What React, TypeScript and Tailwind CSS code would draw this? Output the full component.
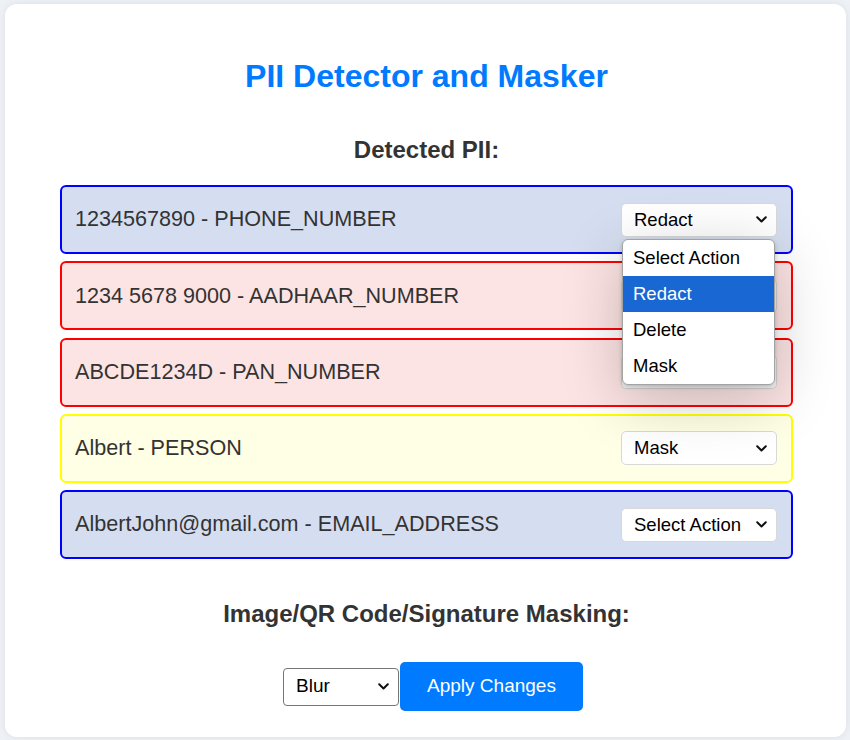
import React from "react";

type Pii = { text: string; kind: "blue" | "red" | "yellow"; action: string };

// rows 2 and 3 sit under the open menu, so their value is not shown
const items: Pii[] = [
  { text: "1234567890 - PHONE_NUMBER", kind: "blue", action: "Redact" },
  { text: "1234 5678 9000 - AADHAAR_NUMBER", kind: "red", action: "" },
  { text: "ABCDE1234D - PAN_NUMBER", kind: "red", action: "" },
  { text: "Albert - PERSON", kind: "yellow", action: "Mask" },
  { text: "AlbertJohn@gmail.com - EMAIL_ADDRESS", kind: "blue", action: "Select Action" },
];

const rowStyles: Record<Pii["kind"], string> = {
  blue: "bg-[#d5def0] border-[#0000ff]",
  red: "bg-[#fde4e4] border-[#ff0000]",
  yellow: "bg-[#ffffe5] border-[#ffff00]",
};

function Chevron() {
  return (
    <svg width="11" height="7" viewBox="0 0 11 7" fill="none">
      <polyline points="1.2,1.2 5.5,5.5 9.8,1.2" stroke="#111" strokeWidth="2" strokeLinecap="round" strokeLinejoin="round" />
    </svg>
  );
}

function ActionSelect({ value, open }: { value: string; open?: boolean }) {
  return (
    <div className="relative">
      <div className="flex h-[34px] w-[156px] items-center justify-between rounded-[5px] border border-[#d8d8d8] bg-white pl-[12px] pr-[9px] text-[18.5px] text-black">
        <span>{value}</span>
        <Chevron />
      </div>
      {open && (
        <div className="absolute left-[1px] top-[36px] z-10 w-[153px] overflow-hidden rounded-[6px] border border-[#a3a3a3] bg-white text-[18.5px] text-black shadow-[0_14px_60px_rgba(0,0,0,0.22),0_2px_4px_rgba(0,0,0,0.2)]">
          {["Select Action", "Redact", "Delete", "Mask"].map((o) => (
            <div
              key={o}
              className={`flex h-[36px] items-center pl-[10px] ${o === value ? "bg-[#1967d2] text-white" : ""}`}
            >
              {o}
            </div>
          ))}
        </div>
      )}
    </div>
  );
}

export default function App() {
  return (
    <div className="min-h-[740px] bg-[#eef1f5] pt-[4px] font-['Liberation_Sans',Arial,sans-serif]">
      <div className="ml-[5px] w-[841px] rounded-[12px] bg-white pb-[26px] pl-[55px] pr-[53px] pt-[54px] shadow-[0_0_8px_rgba(0,0,0,0.08)]">
        <h1 className="text-center text-[32px] font-bold leading-[37px] text-[#007bff]">PII Detector and Masker</h1>

        <h2 className="mt-[41px] text-center text-[24px] font-bold leading-[28px] text-[#333]">Detected PII:</h2>

        <div className="mt-[21px] flex flex-col gap-[7.25px]">
          {items.map((it, i) => (
            <div
              key={it.text}
              className={`flex h-[69px] items-center justify-between rounded-[6px] border-2 pl-[13px] pr-[14px] ${rowStyles[it.kind]}`}
            >
              <span className="text-[21.6px] text-[#333]">{it.text}</span>
              <ActionSelect value={it.action} open={i === 0} />
            </div>
          ))}
        </div>

        <h2 className="mt-[41px] text-center text-[24px] font-bold leading-[28px] text-[#333]">
          Image/QR Code/Signature Masking:
        </h2>

        <div className="mt-[34px] ml-[13px] flex items-center justify-center gap-[1px]">
          <div className="flex h-[38px] w-[116px] items-center justify-between rounded-[4px] border border-[#767676] bg-white pl-[12px] pr-[9px] text-[19px] text-black">
            <span>Blur</span>
            <Chevron />
          </div>
          <button className="h-[49px] w-[183px] rounded-[5px] bg-[#007bff] text-[19px] text-white">Apply Changes</button>
        </div>
      </div>
    </div>
  );
}
